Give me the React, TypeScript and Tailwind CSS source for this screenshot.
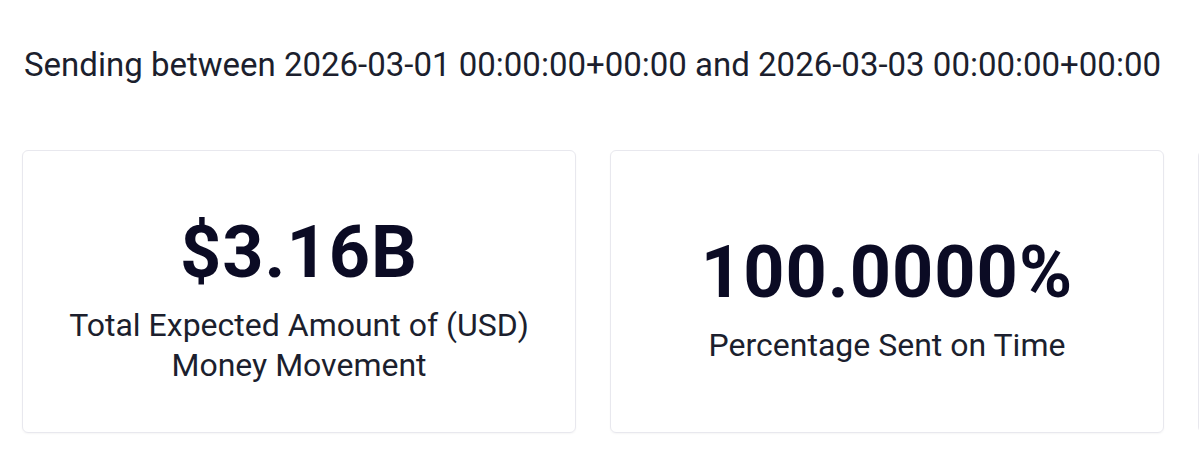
const stats = [
  { value: '$3.16B', label: ['Total Expected Amount of (USD)', 'Money Movement'] },
  { value: '100.0000%', label: ['Percentage Sent on Time'] },
]

export default function App() {
  return (
    <div className="w-[1199px] h-[460px] overflow-hidden bg-white font-['Roboto','Liberation_Sans',sans-serif]">
      <div className="pt-[44px] pl-[24px]">
        <p className="text-[33px] leading-[42px] text-[#1c1f2e] whitespace-nowrap">
          Sending between 2026-03-01 00:00:00+00:00 and 2026-03-03 00:00:00+00:00
        </p>
      </div>

      {/* Stat cards */}
      <div className="flex gap-[34px] pl-[22px] mt-[64px]">
        {stats.map((s) => (
          <div
            key={s.value}
            className="shrink-0 w-[554px] h-[283px] rounded-md border border-[#e8e8ee] shadow-[0_1px_2px_rgba(0,0,0,0.04)] flex flex-col items-center justify-center pt-[15px]"
          >
            <div className="text-[72px] leading-[80px] font-bold tracking-[1px] text-[#0b0b24]">{s.value}</div>
            <div className="mt-[12px] text-center text-[32px] leading-[40px] text-[#1c1f2e]">
              {s.label.map((l) => (
                <div key={l}>{l}</div>
              ))}
            </div>
          </div>
        ))}
        {/* next card, mostly off-screen */}
        <div className="shrink-0 w-[554px] h-[283px] rounded-md border border-[#e8e8ee]" />
      </div>
    </div>
  )
}
